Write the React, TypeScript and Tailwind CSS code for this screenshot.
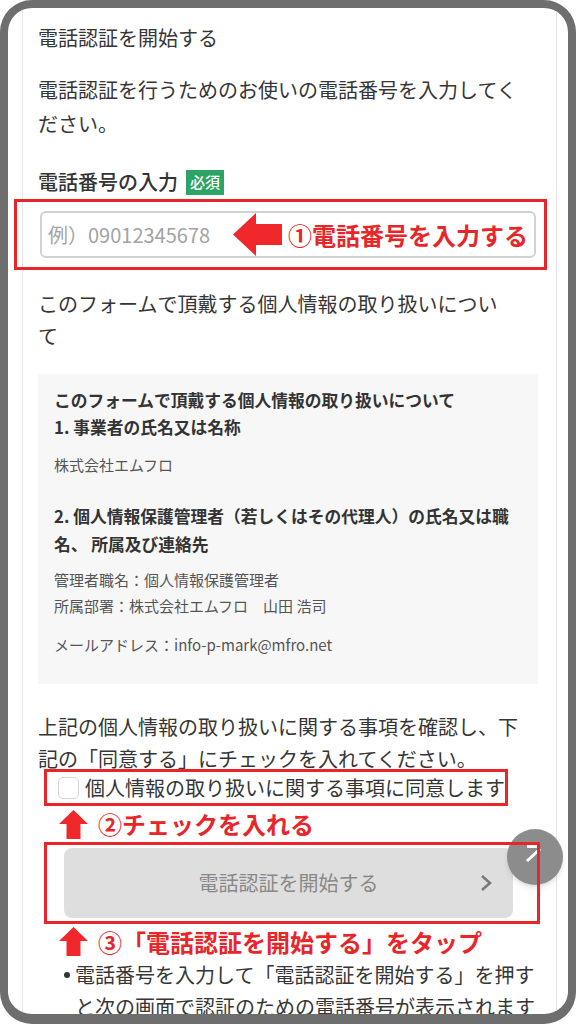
/**
 * Phone verification form - annotated screenshot
 */

const RED = 'text-[#e8262a]';

function LeftArrow() {
  return (
    <svg width="49" height="43" viewBox="0 0 49 43" className="shrink-0" aria-hidden="true">
      <polygon points="0,21.5 23,0 23,11 49,11 49,32 23,32 23,43" fill="#f0282b" />
    </svg>
  );
}

function UpArrow() {
  return (
    <svg width="29" height="29" viewBox="0 0 29 29" className="shrink-0" aria-hidden="true">
      <polygon points="14.5,0 29,14 21.5,14 21.5,29 7.5,29 7.5,14 0,14" fill="#f0282b" />
    </svg>
  );
}

export default function App() {
  return (
    <div className="h-[1024px] w-[576px] bg-white font-['Noto_Sans_CJK_JP','Noto_Sans',sans-serif] text-[#363636]">
      {/* Phone frame */}
      <div className="relative h-full overflow-hidden rounded-[32px] border-8 border-b-[10px] border-[#6e6e6e]">
        {/* Card */}
        <div className="ml-[14px] mr-[11px] h-full border-x border-[#e6e6e6] pl-[15px] pr-[18px] pt-[15px]">
          <h2 className="text-[20px] leading-[30px]">電話認証を開始する</h2>

          <p className="mt-[20px] whitespace-nowrap text-[20px] leading-[34px]">
            電話認証を行うためのお使いの電話番号を入力してく
            <br />
            ださい。
          </p>

          {/* Phone label */}
          <div className="mt-[26px] flex items-center">
            <span className="text-[20px] font-medium leading-[30px] text-[#333]">電話番号の入力</span>
            <span className="ml-[8px] flex h-[25px] items-center bg-[#2ea366] px-[4px] text-[15px] font-medium text-white">
              必須
            </span>
          </div>

          {/* Annotated input */}
          <div className="relative -ml-[24px] -mr-[9px] mt-[2px] px-[3px] py-[3px]">
            <div className="pb-[9px] pl-[23px] pr-[8px] pt-[9px]">
              <div className="flex h-[47px] items-center rounded-[6px] border-2 border-[#d2d2d2] bg-white pl-[6px]">
                <span className="w-[185px] text-[20px] text-[#a3a3a3]">例）09012345678</span>
                <LeftArrow />
                <span className={`ml-[6px] whitespace-nowrap text-[24px] font-bold ${RED}`}>①電話番号を入力する</span>
              </div>
            </div>
            <span className="pointer-events-none absolute inset-0 z-20 border-[3px] border-[#e8262a]" />
          </div>

          <h3 className="mt-[18px] whitespace-nowrap text-[20px] leading-[32px]">
            このフォームで頂戴する個人情報の取り扱いについ
            <br />
            て
          </h3>

          {/* Privacy box */}
          <div className="mt-[22px] bg-[#f7f7f7] px-[16px] pb-[26px] pt-[13px]">
            <p className="whitespace-nowrap text-[16.75px] font-bold leading-[27px] text-[#333]">
              このフォームで頂戴する個人情報の取り扱いについて
              <br />
              1. 事業者の氏名又は名称
            </p>
            <p className="mt-[11px] text-[15px] leading-[26px] text-[#555]">株式会社エムフロ</p>
            <p className="mt-[24px] whitespace-nowrap text-[16.75px] font-bold leading-[28px] text-[#333]">
              2. 個人情報保護管理者（若しくはその代理人）の氏名又は職
              <br />
              名、 所属及び連絡先
            </p>
            <p className="mt-[9px] text-[15px] leading-[26px] text-[#555]">
              管理者職名：個人情報保護管理者
              <br />
              所属部署：株式会社エムフロ　山田 浩司
            </p>
            <p className="mt-[13px] text-[15px] leading-[26px] text-[#555]">メールアドレス：info-p-mark@mfro.net</p>
          </div>

          <p className="mt-[27px] whitespace-nowrap text-[20px] leading-[32px]">
            上記の個人情報の取り扱いに関する事項を確認し、下
            <br />
            記の「同意する」にチェックを入れてください。
          </p>

          {/* Annotated checkbox */}
          <div className="relative -mt-[6px] ml-[6px] w-[464px] p-[3px]">
            <label className="flex h-[31px] items-center pl-[11px]">
              <span className="h-[22px] w-[22px] rounded-[5px] border border-[#d4d4d4] bg-white" />
              <span className="ml-[6px] whitespace-nowrap text-[20px]">個人情報の取り扱いに関する事項に同意します</span>
            </label>
            <span className="pointer-events-none absolute inset-0 z-20 border-[3px] border-[#e8262a]" />
          </div>

          <div className="flex h-[36px] items-center pl-[21px]">
            <UpArrow />
            <span className={`ml-[10px] whitespace-nowrap text-[24px] font-bold ${RED}`}>②チェックを入れる</span>
          </div>

          {/* Annotated submit button */}
          <div className="relative ml-[6px] w-[496px] pb-[6px] pl-[20px] pt-[6px]">
            <button
              type="button"
              className="relative flex h-[70px] w-[449px] items-center justify-center rounded-[8px] bg-[#dedede] text-[20px] text-[#888]"
            >
              電話認証を開始する
              <svg
                className="absolute right-[20px] top-1/2 -translate-y-1/2"
                width="13"
                height="20"
                viewBox="0 0 13 20"
                fill="none"
                stroke="#777"
                strokeWidth="2.5"
                aria-hidden="true"
              >
                <path d="M2 3l8 7-8 7" />
              </svg>
            </button>
            <span className="pointer-events-none absolute inset-0 z-20 border-[3px] border-[#e8262a]" />
          </div>

          <div className="flex h-[35px] items-center pl-[21px]">
            <UpArrow />
            <span className={`ml-[10px] whitespace-nowrap text-[24px] font-bold ${RED}`}>
              ③「電話認証を開始する」をタップ
            </span>
          </div>

          {/* Notes */}
          <div className="flex text-[20px] leading-[32px]">
            <span className="ml-[26px] mt-[13px] h-[6px] w-[6px] shrink-0 rounded-full bg-[#333]" />
            <p className="ml-[5px] whitespace-nowrap">
              電話番号を入力して「電話認証を開始する」を押す
              <br />
              と次の画面で認証のための電話番号が表示されます
            </p>
          </div>
        </div>

        {/* Scroll to top */}
        <div className="absolute left-[499px] top-[821px] z-10 h-[56px] w-[56px] rounded-full bg-[#8c8c8c] shadow-md">
          <svg width="56" height="56" viewBox="0 0 56 56" fill="none" stroke="white" strokeWidth="3" aria-hidden="true">
            <path d="M20 17.5h13M20 32l13-12" />
          </svg>
        </div>
      </div>
    </div>
  );
}
